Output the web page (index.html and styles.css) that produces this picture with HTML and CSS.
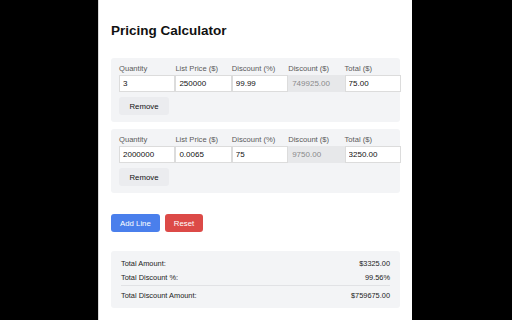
FILE: index.html
```html
<!DOCTYPE html>
<html>
<head>
<meta charset="utf-8">
<link rel="stylesheet" href="styles.css">
</head>
<body>
<div class="page">
  <h1 class="title">Pricing Calculator</h1>

  <div class="line">
    <div class="fields">
      <div class="field"><label class="lbl">Quantity</label><input class="inp" value="3"></div>
      <div class="field"><label class="lbl">List Price ($)</label><input class="inp" value="250000"></div>
      <div class="field"><label class="lbl">Discount (%)</label><input class="inp" value="99.99"></div>
      <div class="field"><label class="lbl">Discount ($)</label><input class="inp ro" value="749925.00" disabled></div>
      <div class="field"><label class="lbl">Total ($)</label><input class="inp" value="75.00"></div>
    </div>
    <button class="remove">Remove</button>
  </div>

  <div class="line">
    <div class="fields">
      <div class="field"><label class="lbl">Quantity</label><input class="inp" value="2000000"></div>
      <div class="field"><label class="lbl">List Price ($)</label><input class="inp" value="0.0065"></div>
      <div class="field"><label class="lbl">Discount (%)</label><input class="inp" value="75"></div>
      <div class="field"><label class="lbl">Discount ($)</label><input class="inp ro" value="9750.00" disabled></div>
      <div class="field"><label class="lbl">Total ($)</label><input class="inp" value="3250.00"></div>
    </div>
    <button class="remove">Remove</button>
  </div>

  <div class="actions">
    <button class="btn add">Add Line</button>
    <button class="btn reset">Reset</button>
  </div>

  <div class="summary">
    <div class="row r1"><span>Total Amount:</span><span>$3325.00</span></div>
    <div class="row r2"><span>Total Discount %:</span><span>99.56%</span></div>
    <div class="row r3"><span>Total Discount Amount:</span><span>$759675.00</span></div>
  </div>
</div>
</body>
</html>
```

FILE: styles.css
```css
html, body {
  margin: 0;
  padding: 0;
  background: #000;
  height: 100%;
  overflow: hidden;
}
body {
  font-family: "Liberation Sans", Arial, sans-serif;
  color: #111;
}
.page {
  width: 289px;
  margin-left: 98px;
  height: 297px;
  background: #fff;
  border-left: 1px solid #d8d8d8;
  padding: 23px 12px 0 12px;
  box-sizing: content-box;
}
.title {
  margin: 0 0 19px 0;
  font-size: 13.5px;
  line-height: 16px;
  font-weight: bold;
  color: #111;
}
.line {
  background: #f3f4f6;
  border-radius: 3px;
  padding: 6px 8px 7px 8px;
  margin-bottom: 7px;
}
.fields {
  display: grid;
  grid-template-columns: repeat(5, 56.4px);
}
.field {
  display: flex;
  flex-direction: column;
}
.lbl {
  font-size: 7.6px;
  line-height: 10px;
  color: #5a5a5a;
  margin-bottom: 1px;
}
.inp {
  height: 17px;
  box-sizing: border-box;
  width: 100%;
  margin: 0;
  border: 1px solid #dcdcdc;
  background: #fff;
  font-family: "Liberation Sans", Arial, sans-serif;
  font-size: 8px;
  color: #111;
  padding: 0 3px;
  outline: none;
}
.inp.ro {
  background: #e7e8ea;
  border-color: #e7e8ea;
  color: #8a8a8a;
}
.remove {
  display: block;
  margin-top: 5px;
  height: 18px;
  width: 50px;
  padding: 0;
  border: none;
  border-radius: 3px;
  background: #ebecef;
  font-family: "Liberation Sans", Arial, sans-serif;
  font-size: 7.8px;
  color: #111;
}
.actions {
  display: flex;
  gap: 5px;
  margin-top: 21px;
}
.btn {
  height: 18px;
  padding: 0 9px;
  border: none;
  border-radius: 3px;
  color: #fff;
  font-family: "Liberation Sans", Arial, sans-serif;
  font-size: 7.8px;
}
.add {
  background: #4a7fec;
}
.reset {
  background: #dc4a47;
}
.summary {
  margin-top: 19px;
  background: #f3f4f6;
  border-radius: 3px;
  padding: 8px 10px 7px 10px;
}
.row {
  display: flex;
  justify-content: space-between;
  font-size: 7.4px;
  line-height: 10px;
  color: #222;
}
.r1 {
  margin-bottom: 4px;
}
.r2 {
  padding-bottom: 2px;
  border-bottom: 1px solid #e1e2e5;
}
.r3 {
  margin-top: 5px;
}
```
